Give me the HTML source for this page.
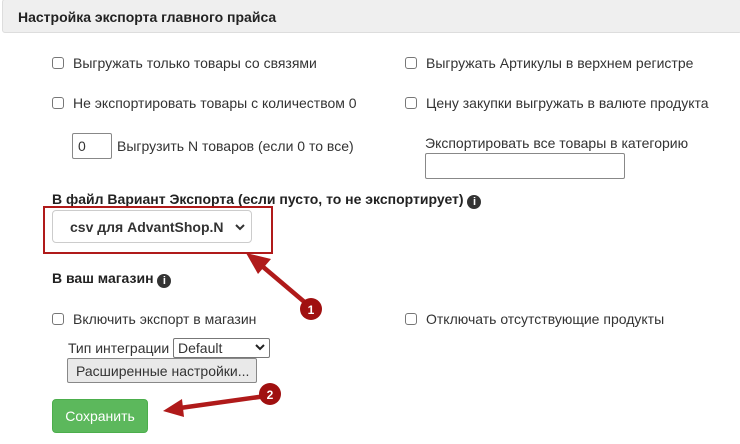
<!DOCTYPE html>
<html><head><meta charset="utf-8"><style>
body{margin:0;width:740px;height:444px;background:#fff;font-family:"Liberation Sans",Arial,sans-serif;font-size:14px;color:#333;position:relative;overflow:hidden}
.a{position:absolute;white-space:nowrap}
.hdr{position:absolute;left:2px;top:-1px;width:740px;height:34px;background:#efefef;border:1px solid #ddd;border-radius:3px;box-sizing:border-box}
.cb{position:absolute;width:12px;height:12px;border:1px solid #777;border-radius:3px;box-sizing:border-box;background:#fff}
.b{font-weight:bold;color:#222}
.info{display:inline-block;width:14px;height:14px;border-radius:50%;background:#333;color:#fff;font-size:11px;line-height:14px;text-align:center;font-weight:bold;vertical-align:-1px}
</style></head><body>
<div class="hdr"></div>
<div class="a b" style="left:18px;top:9px;font-size:14px">Настройка экспорта главного прайса</div>

<div class="cb" style="left:52px;top:57px"></div><div class="a" style="left:73px;top:55px">Выгружать только товары со связями</div>
<div class="cb" style="left:52px;top:97px"></div><div class="a" style="left:73px;top:95px">Не экспортировать товары с количеством 0</div>
<div class="a" style="left:72px;top:133px;width:40px;height:26px;border:1px solid #888;border-radius:2px;box-sizing:border-box;padding:4px 0 0 5px">0</div>
<div class="a" style="left:117px;top:138px">Выгрузить N товаров (если 0 то все)</div>

<div class="cb" style="left:405px;top:57px"></div><div class="a" style="left:426px;top:55px">Выгружать Артикулы в верхнем регистре</div>
<div class="cb" style="left:405px;top:97px"></div><div class="a" style="left:426px;top:95px">Цену закупки выгружать в валюте продукта</div>
<div class="a" style="left:425px;top:135px">Экспортировать все товары в категорию</div>
<div class="a" style="left:425px;top:153px;width:200px;height:26px;border:1px solid #888;border-radius:2px;box-sizing:border-box"></div>

<div class="a b" style="left:52px;top:191px">В файл Вариант Экспорта (если пусто, то не экспортирует) <span class="info">i</span></div>
<div class="a" style="left:43px;top:206px;width:230px;height:48px;border:2px solid #b01a1a;box-sizing:border-box"></div>
<div class="a" style="left:52px;top:210px;width:200px;height:33px;border:1px solid #ccc;border-radius:4px;box-sizing:border-box"></div>
<div class="a b" style="left:70px;top:219px;font-size:14px;color:#333">csv для AdvantShop.N</div>
<svg class="a" style="left:234px;top:222px" width="12" height="10"><path d="M2 3 L6 7 L10 3" stroke="#333" stroke-width="2" fill="none"/></svg>

<div class="a b" style="left:52px;top:270px">В ваш магазин <span class="info">i</span></div>
<div class="cb" style="left:52px;top:313px"></div><div class="a" style="left:73px;top:311px">Включить экспорт в магазин</div>
<div class="cb" style="left:405px;top:313px"></div><div class="a" style="left:426px;top:311px">Отключать отсутствующие продукты</div>

<div class="a" style="left:68px;top:340px">Тип интеграции</div>
<div class="a" style="left:173px;top:338px;width:97px;height:20px;border:1px solid #777;border-radius:2px;box-sizing:border-box;padding:1px 0 0 4px">Default</div>
<svg class="a" style="left:254px;top:343px" width="12" height="10"><path d="M2 2 L6 6 L10 2" stroke="#222" stroke-width="2" fill="none"/></svg>
<div class="a" style="left:67px;top:358px;width:190px;height:25px;border:1px solid #888;border-radius:2px;background:#e9e9e9;box-sizing:border-box;padding:4px 0 0 8px">Расширенные настройки...</div>

<div class="a" style="left:52px;top:399px;width:96px;height:34px;background:#5cb85c;border:1px solid #4cae4c;border-radius:4px;box-sizing:border-box;color:#fff;text-align:center;line-height:32px">Сохранить</div>

<svg class="a" style="left:0;top:0" width="740" height="444">
<line x1="308" y1="305" x2="262" y2="266" stroke="#b01a1a" stroke-width="4.5"/>
<polygon points="246,253 271,259 258,274" fill="#b01a1a"/>
<circle cx="311" cy="309" r="11" fill="#a01010"/>
<text x="311" y="314" font-family="Liberation Sans" font-size="12" font-weight="bold" fill="#fff" text-anchor="middle">1</text>
<line x1="266" y1="396" x2="180" y2="408" stroke="#b01a1a" stroke-width="4.5"/>
<polygon points="163,411 182,399 184,417" fill="#b01a1a"/>
<circle cx="270" cy="394" r="11" fill="#a01010"/>
<text x="270" y="399" font-family="Liberation Sans" font-size="12" font-weight="bold" fill="#fff" text-anchor="middle">2</text>
</svg>
</body></html>
